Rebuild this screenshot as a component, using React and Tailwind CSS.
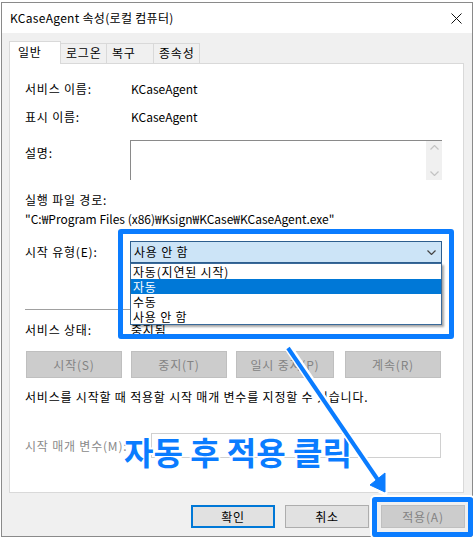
import React from 'react'

const blue = 'border-[#0a7cff]'

const Tab = ({ label, active, w }) => (
    <div
        className={
            active
                ? 'h-[23px] bg-white border border-b-0 border-[#d9d9d9] pl-[8px] pt-[2px] relative z-10 -mb-px'
                : 'h-[20px] bg-[#f0f0f0] border border-b-0 border-[#d9d9d9] -ml-px pl-[5px] pt-px'
        }
        style={{ width: w }}
    >
        {label}
    </div>
)

const GrayButton = ({ label, w, className = '' }) => (
    <div
        className={`h-[27px] bg-[#cccccc] border border-[#bfbfbf] text-[#838383] flex items-center justify-center ${className}`}
        style={{ width: w }}
    >
        {label}
    </div>
)

const Chevron = ({ up, color = '#c3c3c3' }) => (
    <svg width="9" height="5" viewBox="0 0 9 5">
        <path d={up ? 'M0.5 4.5 L4.5 0.5 L8.5 4.5' : 'M0.5 0.5 L4.5 4.5 L8.5 0.5'} fill="none" stroke={color} strokeWidth="1.2" />
    </svg>
)

const App = () => {
    return (
        <div className="w-[476px] h-[540px] bg-white relative overflow-hidden pl-px pt-[2px] text-[12px] leading-[16px] tracking-[0.8px] text-black font-['Noto_Sans_CJK_KR','Noto_Sans',sans-serif]">
            {/* window */}
            <div className="w-[472px] h-[535px] border border-[#8a8a8a] flex flex-col">
                <div className="h-[30px] bg-white flex items-center justify-between pl-[8px] pr-[10px]">
                    <span className="tracking-[0.3px]">KCaseAgent 속성(로컬 컴퓨터)</span>
                    <svg width="11" height="11" viewBox="0 0 11 11">
                        <path d="M0.5 0.5 L10.5 10.5 M10.5 0.5 L0.5 10.5" stroke="#111" strokeWidth="1" />
                    </svg>
                </div>

                <div className="flex-1 bg-[#f0f0f0] pl-[7px] pt-[8px] flex flex-col">
                    {/* tabs */}
                    <div className="flex items-end h-[22px]">
                        <Tab label="일반" active w={52} />
                        <Tab label="로그온" w={47} />
                        <Tab label="복구" w={48} />
                        <Tab label="종속성" w={47} />
                    </div>

                    {/* panel */}
                    <div className="w-[455px] h-[430px] bg-white border border-[#d9d9d9] pl-[15px] flex flex-col">
                        <div className="mt-[17px] flex">
                            <span className="w-[105px]">서비스 이름:</span>
                            <span className="pl-px tracking-normal">KCaseAgent</span>
                        </div>
                        <div className="mt-[12px] flex">
                            <span className="w-[105px]">표시 이름:</span>
                            <span className="pl-px tracking-normal">KCaseAgent</span>
                        </div>
                        <div className="mt-[15px] flex">
                            <span className="w-[105px] mt-[5px]">설명:</span>
                            <div className="w-[312px] h-[40px] border-t border-l border-[#8a8a8a] flex justify-end">
                                <div className="w-[16px] h-full bg-[#f0f0f0] flex flex-col items-center justify-between py-[4px]">
                                    <Chevron up />
                                    <Chevron />
                                </div>
                            </div>
                        </div>
                        <div className="mt-[12px]">실행 파일 경로:</div>
                        <div className="mt-[3px] tracking-normal">"C:₩Program Files (x86)₩Ksign₩KCase₩KCaseAgent.exe"</div>
                        <div className="mt-[14px] flex items-center">
                            <span className="w-[105px]">시작 유형(E):</span>
                            <div className="relative">
                                <div className="w-[312px] h-[22px] bg-[#cce4f7] border border-[#2d5e8e] flex items-center justify-between pl-[3px] pr-[5px]">
                                    <span>사용 안 함</span>
                                    <Chevron color="#444" />
                                </div>
                                <div className="absolute left-0 top-full w-[312px] h-[62px] bg-white border border-[#3a6a9a] shadow-[2px_2px_2px_rgba(0,0,0,0.35)] z-20 flex flex-col">
                                    <div className="h-[15px] pl-[2px] leading-[15px]">자동(지연된 시작)</div>
                                    <div className="h-[15px] pl-[2px] leading-[15px] bg-[#0078d7] text-white">자동</div>
                                    <div className="h-[15px] pl-[2px] leading-[15px]">수동</div>
                                    <div className="h-[15px] pl-[2px] leading-[15px]">사용 안 함</div>
                                </div>
                            </div>
                        </div>
                        <div className="mt-[46px] h-px w-[416px] bg-[#a0a0a0]" />
                        <div className="mt-[12px] flex">
                            <span className="w-[105px]">서비스 상태:</span>
                            <span className="pl-px">중지됨</span>
                        </div>
                        <div className="mt-[13px] flex pl-px">
                            <GrayButton label="시작(S)" w={96} />
                            <GrayButton label="중지(T)" w={96} className="ml-[9px]" />
                            <GrayButton label="일시 중지(P)" w={98} className="ml-[9px]" />
                            <GrayButton label="계속(R)" w={96} className="ml-[11px]" />
                        </div>
                        <div className="mt-[11px]">서비스를 시작할 때 적용할 시작 매개 변수를 지정할 수 있습니다.</div>
                        <div className="mt-[28px] flex items-center">
                            <span className="w-[126px] text-[#8a8a8a]">시작 매개 변수(M):</span>
                            <div className="w-[290px] h-[25px] border border-[#d0d0d0] bg-white" />
                        </div>
                    </div>

                    {/* dialog buttons */}
                    <div className="mt-[12px] flex pl-[182px]">
                        <div className="w-[84px] h-[23px] border-2 border-[#0078d7] bg-[#e1e1e1] flex items-center justify-center">확인</div>
                        <div className="ml-[10px] w-[84px] h-[23px] border border-[#adadad] bg-[#e1e1e1] flex items-center justify-center">취소</div>
                        <div className="ml-[12px] w-[84px] h-[23px] border border-[#bfbfbf] bg-[#cccccc] text-[#838383] flex items-center justify-center">적용(A)</div>
                    </div>
                </div>
            </div>

            {/* annotations */}
            <div className={`absolute left-[118px] top-[229px] w-[336px] h-[110px] border-[5px] ${blue} rounded-[3px]`} />
            <div className={`absolute left-[372px] top-[497px] w-[101px] h-[40px] border-[5px] ${blue} rounded-[3px] shadow-[0_0_0_2px_white]`} />
            <div className="absolute left-[124px] top-[435px] text-[32px] leading-none font-bold tracking-normal text-[#0a7cff] whitespace-nowrap [text-shadow:2px_0_0_white,-2px_0_0_white,0_2px_0_white,0_-2px_0_white,1px_1px_0_white,-1px_-1px_0_white,1px_-1px_0_white,-1px_1px_0_white]">
                자동 후 적용 클릭
            </div>
            <svg className="absolute inset-0 pointer-events-none" width="476" height="540" viewBox="0 0 476 540">
                <line x1="288" y1="347" x2="378" y2="480" stroke="white" strokeWidth="8" />
                <polygon points="385,493 369,485 386,472" fill="white" stroke="white" strokeWidth="5" strokeLinejoin="round" />
                <line x1="288" y1="348" x2="378" y2="480" stroke="#0a7cff" strokeWidth="4" />
                <polygon points="385,492 370,485 385,473" fill="#0a7cff" stroke="#0a7cff" strokeWidth="1" />
            </svg>
        </div>
    )
}

export default App
